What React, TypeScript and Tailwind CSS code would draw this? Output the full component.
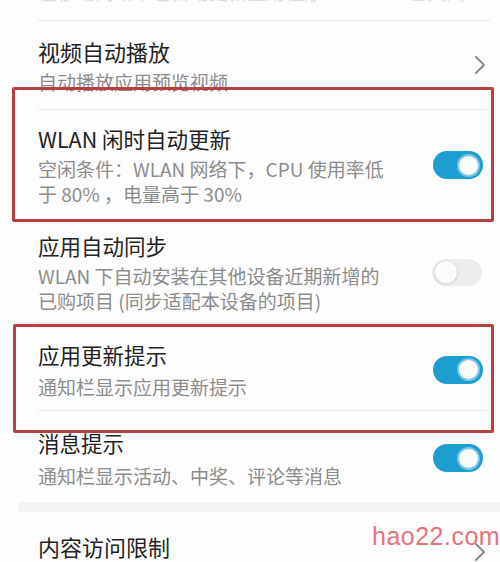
import React from "react";

const font = { fontFamily: '"Noto Sans CJK SC", "Noto Sans", sans-serif' };

function Toggle({ on }: { on: boolean }) {
  return on ? (
    <div className="w-[50px] h-[28px] rounded-full bg-[#1c9fd0] flex items-center justify-end pr-[3px] shrink-0">
      <div className="w-[23px] h-[23px] rounded-full bg-[#fcfcfc] border-2 border-[#7cc6e4]" />
    </div>
  ) : (
    <div className="w-[50px] h-[27px] rounded-full bg-[#ededed] flex items-center justify-start pl-[2px] shrink-0">
      <div className="w-[24px] h-[24px] rounded-full bg-[#fbfbfb] border border-[#e0e0e0] shadow-[0_1px_2px_rgba(0,0,0,0.1)]" />
    </div>
  );
}

function Chevron() {
  return (
    <svg width="12" height="20" viewBox="0 0 12 20" className="shrink-0">
      <path d="M2 2 L10 10 L2 18" fill="none" stroke="#8a8a8a" strokeWidth="2" strokeLinecap="round" strokeLinejoin="round" />
    </svg>
  );
}

export default function App() {
  return (
    <div className="relative w-[500px] h-[562px] overflow-hidden bg-[#fdfdfd]" style={font}>
      {/* cut-off row at top */}
      <div className="h-[20px] overflow-hidden pl-[38px] pr-[35px] flex justify-between">
        <div className="mt-[-21px] text-[19px] leading-[25px] text-[#dcdcdc]">在移动网络下也自动更新应用程序</div>
        <div className="mt-[-21px] text-[19px] leading-[25px] text-[#e2e2e2]">已关闭</div>
      </div>
      <div className="ml-[38px] mr-[10px] h-px bg-[#e8e8e8]" />

      {/* 视频自动播放 */}
      <div className="pl-[38px] pr-[14px] pt-[15px] pb-[15px] flex items-center justify-between">
        <div>
          <div className="text-[22px] leading-[30px] text-[#222]">视频自动播放</div>
          <div className="mt-[3px] text-[19px] leading-[25px] text-[#8c8c8c]">自动播放应用预览视频</div>
        </div>
        <Chevron />
      </div>
      <div className="ml-[38px] mr-[10px] h-px bg-[#e8e8e8]" />

      {/* WLAN 闲时自动更新 */}
      <div className="pl-[38px] pr-[17px] pt-[14px] pb-[13px] flex items-center justify-between">
        <div>
          <div className="text-[21.5px] leading-[30px] text-[#222]">WLAN 闲时自动更新</div>
          <div className="mt-[2px] text-[19px] leading-[25px] text-[#8c8c8c]">
            空闲条件：WLAN 网络下，CPU 使用率低
            <br />
            于 80% ，电量高于 30%
          </div>
        </div>
        <Toggle on />
      </div>
      <div className="ml-[38px] mr-[10px] h-px bg-[#e8e8e8]" />

      {/* 应用自动同步 */}
      <div className="pl-[38px] pr-[18px] pt-[11px] pb-[9px] flex items-center justify-between">
        <div>
          <div className="text-[21.5px] leading-[30px] text-[#222]">应用自动同步</div>
          <div className="mt-[2px] text-[19px] leading-[25px] text-[#8c8c8c]">
            WLAN 下自动安装在其他设备近期新增的
            <br />
            已购项目 (同步适配本设备的项目)
          </div>
        </div>
        <Toggle on={false} />
      </div>
      <div className="ml-[38px] mr-[10px] h-px bg-[#e8e8e8]" />

      {/* 应用更新提示 */}
      <div className="pl-[38px] pr-[17px] pt-[17px] pb-[11px] flex items-center justify-between">
        <div>
          <div className="text-[21.5px] leading-[30px] text-[#222]">应用更新提示</div>
          <div className="mt-[4px] text-[19px] leading-[25px] text-[#8c8c8c]">通知栏显示应用更新提示</div>
        </div>
        <Toggle on />
      </div>
      <div className="ml-[38px] mr-[10px] h-px bg-[#e8e8e8]" />

      {/* 消息提示 */}
      <div className="pl-[38px] pr-[17px] pt-[17px] pb-[14px] flex items-center justify-between">
        <div>
          <div className="text-[21.5px] leading-[30px] text-[#222]">消息提示</div>
          <div className="mt-[5px] text-[19px] leading-[25px] text-[#8c8c8c]">通知栏显示活动、中奖、评论等消息</div>
        </div>
        <Toggle on />
      </div>
      <div className="ml-[18px] h-[10px] bg-[#f3f3f3]" />

      {/* 内容访问限制 */}
      <div className="pl-[38px] pr-[14px] pt-[18px] flex items-center justify-between">
        <div className="text-[22px] leading-[30px] text-[#222]">内容访问限制</div>
        <div className="mt-[12px]">
          <Chevron />
        </div>
      </div>

      {/* watermark */}
      <div
        className="absolute left-[372px] top-[521px] text-[25px] leading-[30px] text-[#e4737f] tracking-[0.5px]"
        style={{ fontFamily: '"Liberation Sans", Arial, sans-serif' }}
      >
        hao22.com
      </div>

      {/* annotation boxes */}
      <div className="absolute left-[12px] top-[87px] w-[482px] h-[135px] border-[3.5px] border-[#b5403f] rounded-[2px]" />
      <div className="absolute left-[13px] top-[324px] w-[481px] h-[109px] border-[3.5px] border-[#b5403f] rounded-[2px]" />
    </div>
  );
}
